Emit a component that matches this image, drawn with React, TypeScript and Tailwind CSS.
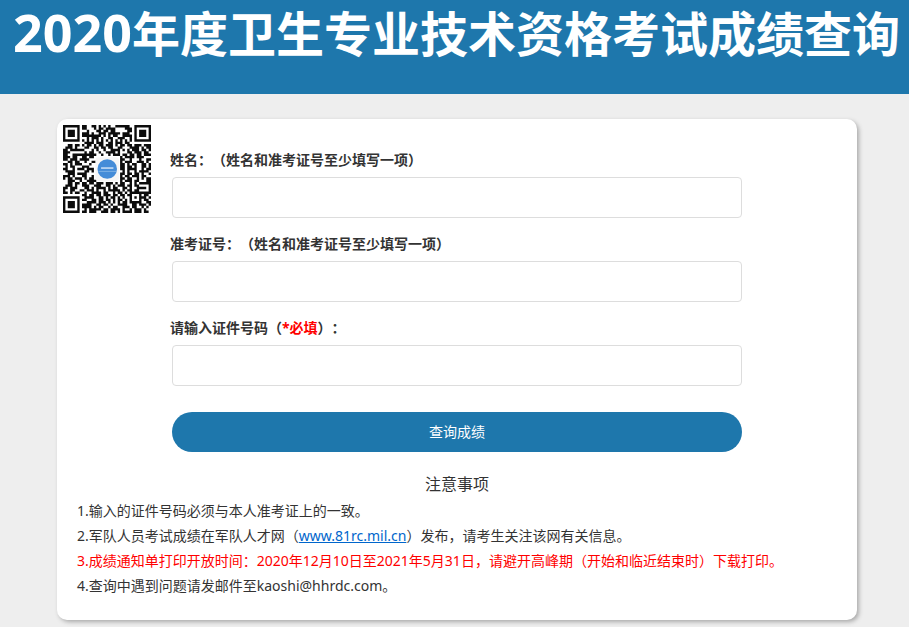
import { useState } from 'react';
import type { FormEvent, ReactNode } from 'react';

const qrRows = [
  '#######.##..##.#.#.#..######..#######',
  '#.....#.##...#.##.####....###.#.....#',
  '#.###.#...#...##.##.##.....##.#.###.#',
  '#.###.#.###.#..###.#####.###..#.###.#',
  '#.###.#.########.#.#.##..####.#.###.#',
  '#.....#...#.###.#..##..###..#.#.....#',
  '#######.#.#.#.#.#.#.#.#.#.#.#.#######',
  '.........####.###..##.###.##.........',
  '..##.##.#.##.#.##.###.#.##.##.###.###',
  '.###.#...##..##.##.##..##...####.#.##',
  '##.######...#.#..#..####.#.#.###.##.#',
  '###......#.##..#..####.#...##.###.##.',
  '##..##########..#..#.###.##.##.##.###',
  '###.##..##.##...........#.####.###...',
  '##.###.####.............##..#...#..##',
  '..##.##..#..##..........#.###..###.#.',
  '##.#.###...#............##.#.##..##.#',
  '.#.##...###.............##.##.#..##.#',
  '##..#.###.###...........##.####..#.##',
  '.####....##.#............#.#..#.####.',
  '..###.####..............##.##.##.#..#',
  '###.#...##..#...........#.##.###.##..',
  '#.##.###.#.##...........##.##..#.#.##',
  '..###..#..####..........#.###.##...##',
  '..##.##.##.##.###.###.#.##..#.#.#####',
  '.###.#..###..###..##.#.###.##.##....#',
  '##.###...##.#.####.#.##..##.#..####.#',
  '#..##..##.###.#..#.#####.#.##.##....#',
  '##.#.##..#..####.##..#.##.#.#########',
  '........##.##.##.###.##.##.##...#.##.',
  '#######..####..##.#.##.#.#..#.#.###.#',
  '#.....#.##..##.##.##.#.##.#.#...#.##.',
  '#.###.#...####.###.#.#.#.##.#####..##',
  '#.###.#.####..##.##.#..####..##.###.#',
  '#.###.#.####.#.##..#.##..###.##..#.#.',
  '#.....#..#.#####.##.####.#..#.###.#..',
  '#######.##.###..###.##.#.####.###.##.',
];

const qrPath = qrRows
  .map((row, y) => [...row].map((cell, x) => (cell === '#' ? `M${x} ${y}h1v1h-1z` : '')).join(''))
  .join('');

function QrCode() {
  return (
    <svg viewBox="0 0 37 37" className="size-[88px] shrink-0" role="img" aria-label="二维码">
      <path d={qrPath} fill="#0c0c0c" />
      <rect x="13.6" y="13.6" width="10" height="10" rx="1.6" fill="#f6f6f6" />
      <circle cx="18.6" cy="18.5" r="4.1" fill="#448cd8" />
      <path d="M16 18.1h5.2" stroke="#d5e6f8" strokeWidth="0.6" />
      <path d="M14.9 19.5h7.4" stroke="#94bfeb" strokeWidth="0.3" />
    </svg>
  );
}

interface FieldProps {
  id: string;
  label: ReactNode;
  value: string;
  onChange: (value: string) => void;
}

function Field({ id, label, value, onChange }: FieldProps) {
  return (
    <div>
      <label htmlFor={id} className="block h-6 text-sm leading-6 font-bold">
        {label}
      </label>
      <div className="mt-[5px] px-0.5">
        <input
          id={id}
          type="text"
          value={value}
          onChange={(e) => onChange(e.target.value)}
          className="block h-[41px] w-full rounded-sm border border-[#dddddd] bg-white px-3 text-sm outline-none focus:border-[#1e77ac]"
        />
      </div>
    </div>
  );
}

export default function App() {
  const [name, setName] = useState('');
  const [ticket, setTicket] = useState('');
  const [idNumber, setIdNumber] = useState('');

  const handleSubmit = (e: FormEvent) => {
    e.preventDefault();
  };

  return (
    <div className="min-h-screen bg-[#eeeeee] pb-2 font-['Noto_Sans','Noto_Sans_CJK_SC',sans-serif] text-[#333333] [text-spacing-trim:space-all]">
      <header className="flex h-[94px] justify-center bg-[#1e77ac] pl-1">
        <h1 className="text-5xl leading-[64px] font-bold whitespace-nowrap text-white">
          <span className="text-[52px]">2020</span>年度卫生专业技术资格考试成绩查询
        </h1>
      </header>

      <main className="mt-[25px] pl-[5px]">
        <div className="mx-auto max-w-[800px] rounded-[10px] bg-white shadow-[2px_2px_4px_#aaaaaa]">
          <div className="flex gap-[19px] pt-1.5 pr-[113px] pl-1.5">
            <QrCode />
            <form onSubmit={handleSubmit} className="flex-1 pt-[23px]">
              <div className="space-y-[14px]">
                <Field id="name" label="姓名：（姓名和准考证号至少填写一项）" value={name} onChange={setName} />
                <Field id="ticket" label="准考证号：（姓名和准考证号至少填写一项）" value={ticket} onChange={setTicket} />
                <Field
                  id="idNumber"
                  label={
                    <>
                      请输入证件号码（<span className="text-[#ff0000]">*必填</span>）：
                    </>
                  }
                  value={idNumber}
                  onChange={setIdNumber}
                />
              </div>
              <div className="mt-[26px] px-0.5">
                <button type="submit" className="block h-10 w-full rounded-full bg-[#1e77ac] text-sm text-white">
                  查询成绩
                </button>
              </div>
            </form>
          </div>

          <section className="px-5 pt-[18px] pb-[22px]">
            <h2 className="text-center text-base leading-7">注意事项</h2>
            <ol className="text-sm leading-[25px]">
              <li>1.输入的证件号码必须与本人准考证上的一致。</li>
              <li>
                2.军队人员考试成绩在军队人才网（
                <a href="http://www.81rc.mil.cn" className="text-[#0066cc] underline">
                  www.81rc.mil.cn
                </a>
                ）发布，请考生关注该网有关信息。
              </li>
              <li className="text-[#ff0000]">
                3.成绩通知单打印开放时间：2020年12月10日至2021年5月31日，请避开高峰期（开始和临近结束时）下载打印。
              </li>
              <li>4.查询中遇到问题请发邮件至kaoshi@hhrdc.com。</li>
            </ol>
          </section>
        </div>
      </main>
    </div>
  );
}
